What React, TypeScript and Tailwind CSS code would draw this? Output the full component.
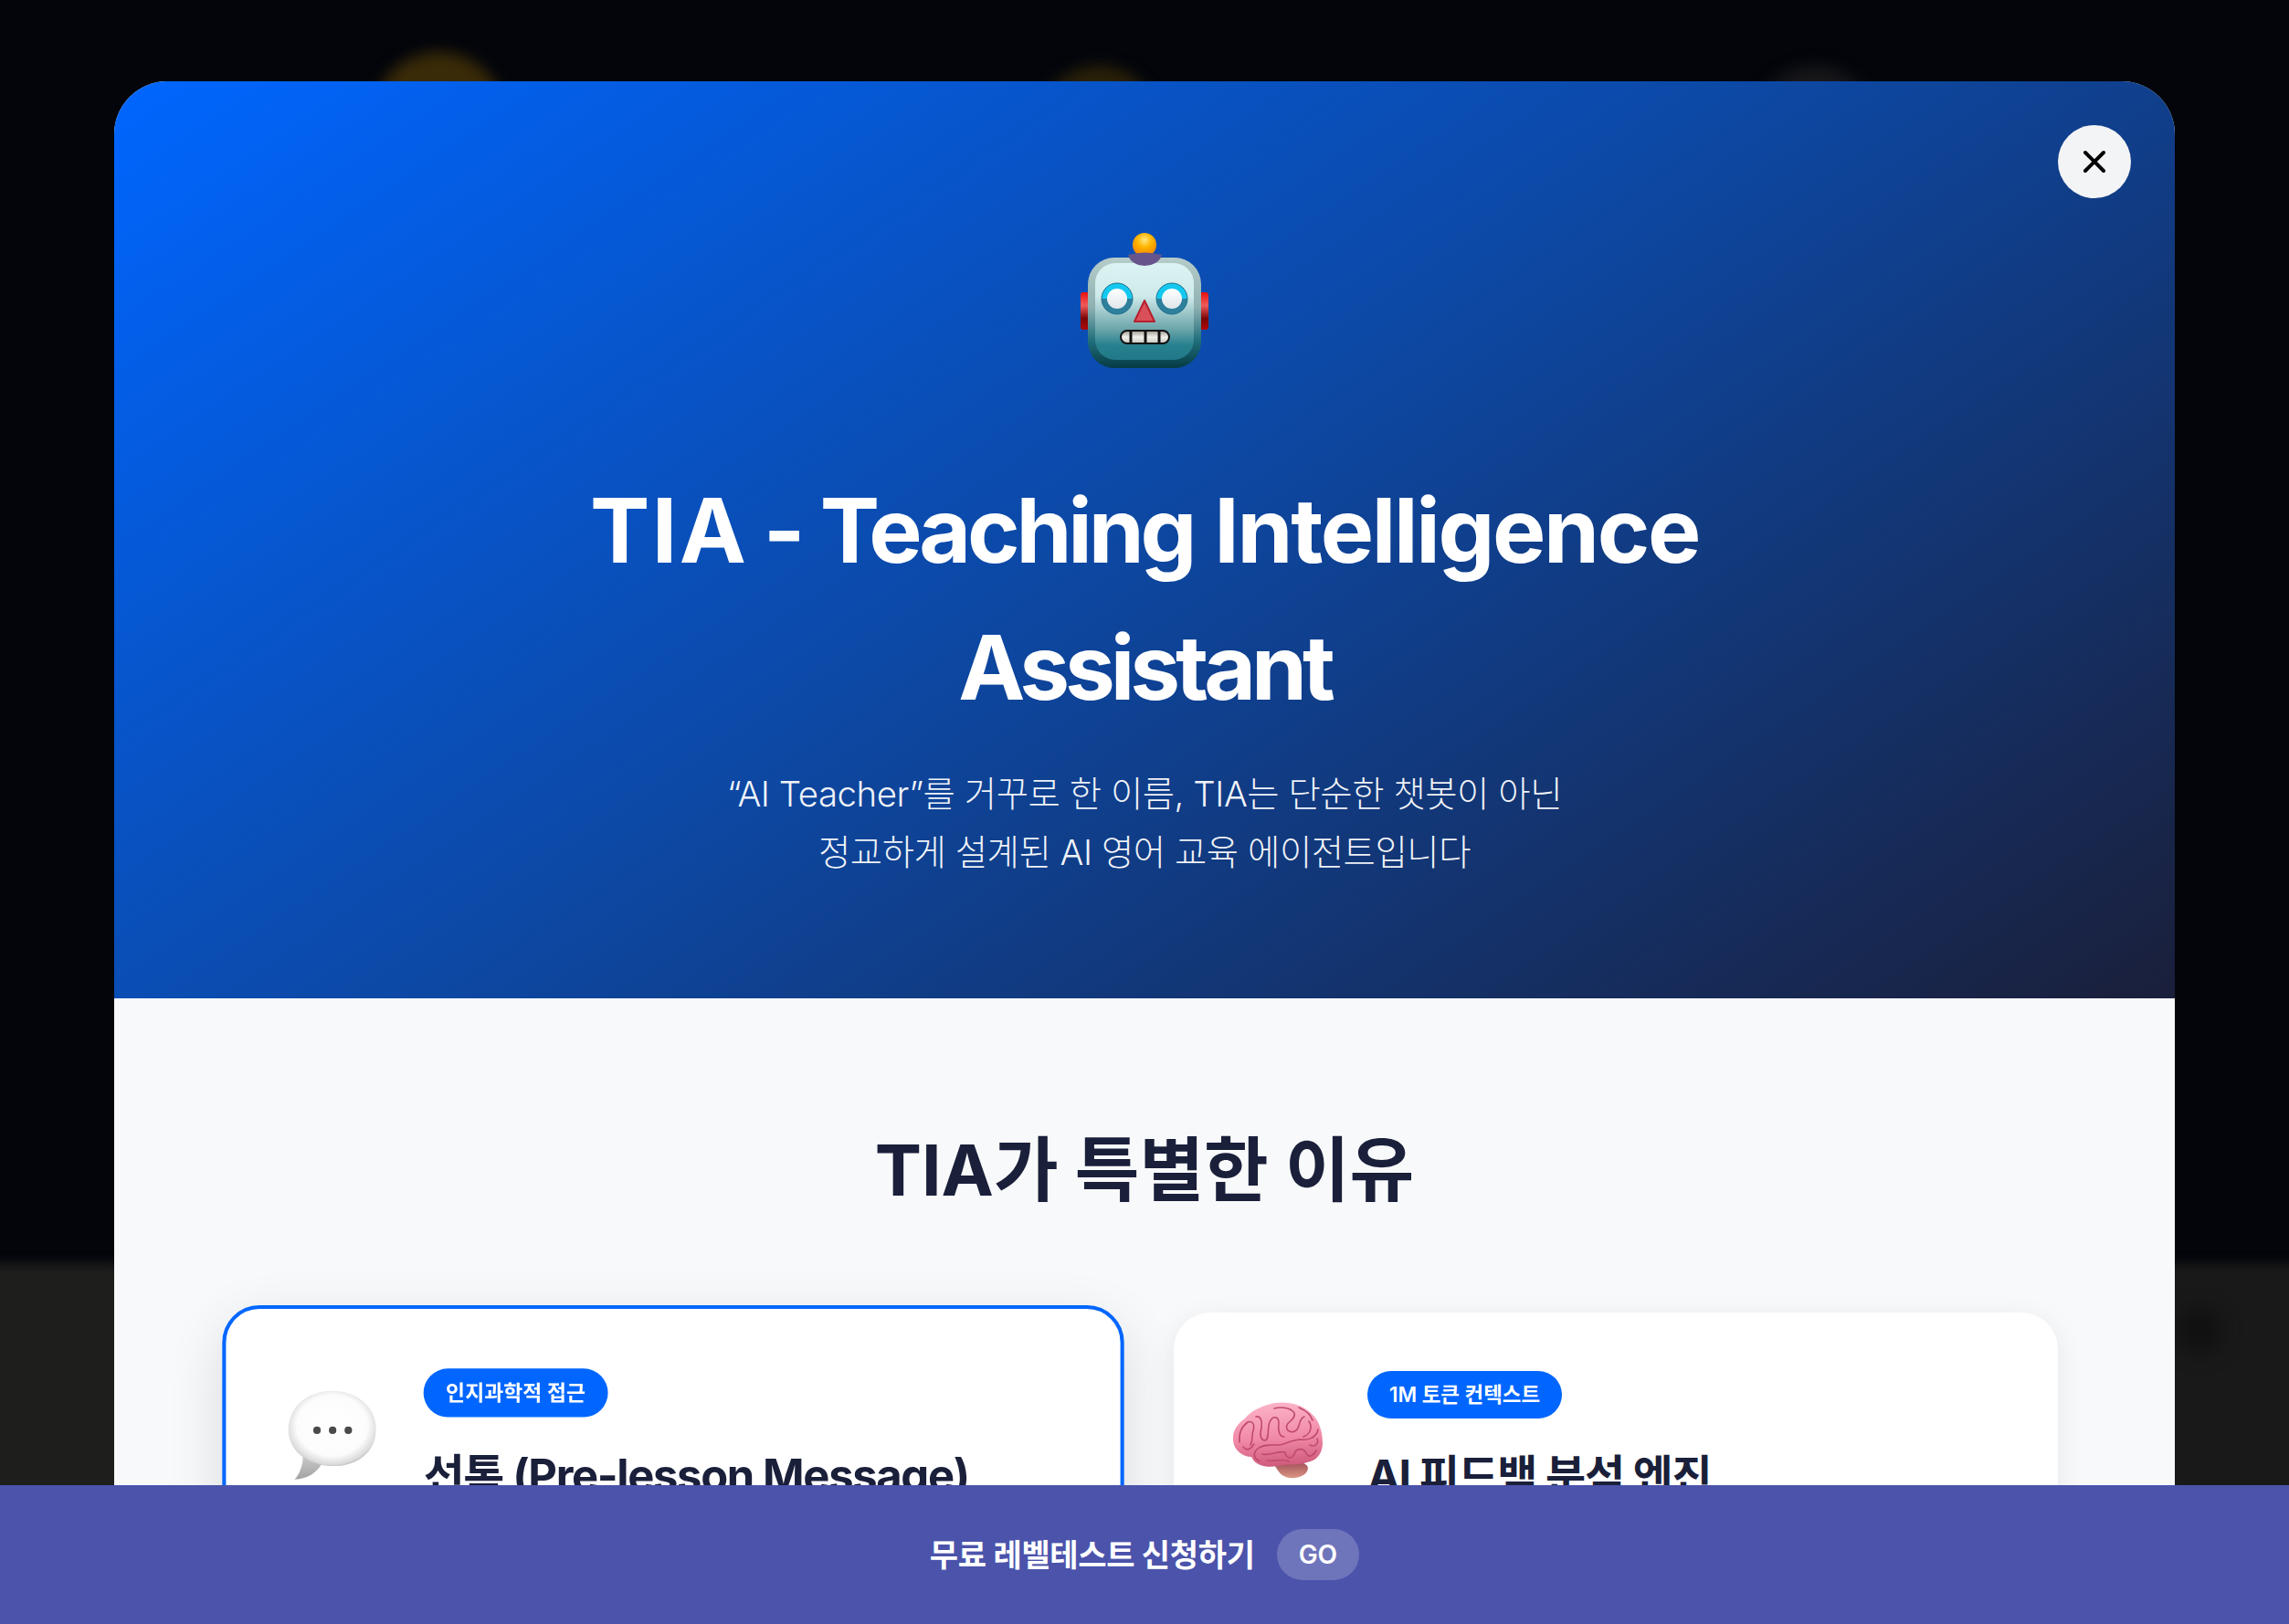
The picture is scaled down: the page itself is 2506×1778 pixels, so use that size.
const kr = "font-['Inter','Noto_Sans_CJK_KR',sans-serif]";

function Robot() {
  return (
    <svg viewBox="0 0 140 148" className="h-[148px] w-[140px]">
      <defs>
        <linearGradient id="rb" x1="0" y1="0" x2="0" y2="1">
          <stop offset="0" stopColor="#b6cdc9" />
          <stop offset="0.45" stopColor="#8fb0b2" />
          <stop offset="0.75" stopColor="#1f6f7c" />
          <stop offset="1" stopColor="#063a44" />
        </linearGradient>
        <linearGradient id="rf" x1="0" y1="0" x2="0" y2="1">
          <stop offset="0" stopColor="#dcf3f3" />
          <stop offset="0.34" stopColor="#cfeaea" />
          <stop offset="0.68" stopColor="#6da6ab" />
          <stop offset="0.85" stopColor="#27808e" />
          <stop offset="1" stopColor="#217988" />
        </linearGradient>
        <linearGradient id="re" x1="0" y1="0" x2="0" y2="1">
          <stop offset="0" stopColor="#e81010" />
          <stop offset="0.35" stopColor="#ef5a5a" />
          <stop offset="0.7" stopColor="#7a0606" />
          <stop offset="1" stopColor="#b00808" />
        </linearGradient>
        <radialGradient id="ro" cx="0.5" cy="0.3" r="0.7">
          <stop offset="0" stopColor="#ffe680" />
          <stop offset="0.45" stopColor="#ffb400" />
          <stop offset="1" stopColor="#f58200" />
        </radialGradient>
        <linearGradient id="rw" x1="0" y1="0" x2="0" y2="1">
          <stop offset="0" stopColor="#ffffff" />
          <stop offset="1" stopColor="#dfe6ea" />
        </linearGradient>
        <linearGradient id="ri" x1="0" y1="0" x2="0" y2="1">
          <stop offset="0" stopColor="#14c8f0" />
          <stop offset="0.5" stopColor="#14c8f0" />
          <stop offset="0.5" stopColor="#2e7f9b" />
          <stop offset="1" stopColor="#2e7f9b" />
        </linearGradient>
        <linearGradient id="rt" x1="0" y1="0" x2="0" y2="1">
          <stop offset="0" stopColor="#9a9a92" />
          <stop offset="0.5" stopColor="#f0f0ea" />
          <stop offset="1" stopColor="#c9c9c1" />
        </linearGradient>
      </defs>
      <rect x="0" y="65" width="10" height="41" rx="3" fill="url(#re)" />
      <rect x="130" y="65" width="10" height="41" rx="3" fill="url(#re)" />
      <rect x="8" y="27" width="124" height="121" rx="29" fill="url(#rb)" />
      <rect x="16" y="33" width="108" height="106" rx="22" fill="url(#rf)" />
      <circle cx="70" cy="13" r="13" fill="url(#ro)" />
      <path d="M52 24 Q70 19 89 24 Q86 35 70 36 Q55 35 52 24Z" fill="#66558c" />
      <circle cx="40" cy="72" r="17" fill="url(#ri)" stroke="#1f6f8a" strokeWidth="1" />
      <circle cx="40" cy="72" r="11" fill="url(#rw)" />
      <circle cx="100" cy="72" r="17" fill="url(#ri)" stroke="#1f6f8a" strokeWidth="1" />
      <circle cx="100" cy="72" r="11" fill="url(#rw)" />
      <path d="M70 74 L81 97 L59 97 Z" fill="#d9505a" stroke="#b5202c" strokeWidth="2" strokeLinejoin="round" />
      <rect x="44" y="107" width="53" height="14" rx="7" fill="url(#rt)" stroke="#111" strokeWidth="2" />
      <path d="M55 107V121M71 107V121M86 107V121" stroke="#111" strokeWidth="3" />
    </svg>
  );
}

function Bubble() {
  return (
    <svg viewBox="0 0 100 100" className="h-24 w-24">
      <defs>
        <radialGradient id="bb" cx="0.5" cy="0.46" r="0.56">
          <stop offset="0" stopColor="#ffffff" />
          <stop offset="0.72" stopColor="#fcfcfc" />
          <stop offset="0.92" stopColor="#dcdcdc" />
          <stop offset="1" stopColor="#b8b8b8" />
        </radialGradient>
        <linearGradient id="bt" x1="0" y1="0" x2="0" y2="1">
          <stop offset="0" stopColor="#cfcfcf" />
          <stop offset="1" stopColor="#a2a2a2" />
        </linearGradient>
      </defs>
      <path d="M17 70 C18 82 14 92 8 99 C22 98 32 92 38 82Z" fill="url(#bt)" />
      <path d="M50 0 C78 0 99 18 99 43 C99 68 78 84 52 84 C24 84 1 68 1 43 C1 18 22 0 50 0Z" fill="url(#bb)" />
      <circle cx="33" cy="44" r="4.2" fill="#4a4a4a" />
      <circle cx="50.5" cy="44" r="4.2" fill="#4a4a4a" />
      <circle cx="68" cy="44" r="4.2" fill="#4a4a4a" />
    </svg>
  );
}

function Brain() {
  return (
    <svg viewBox="0 0 100 84" className="h-[84px] w-[100px]">
      <defs>
        <linearGradient id="br" x1="0.4" y1="0" x2="0.5" y2="1">
          <stop offset="0" stopColor="#fcb4c8" />
          <stop offset="0.55" stopColor="#f18aa8" />
          <stop offset="1" stopColor="#cf5a7a" />
        </linearGradient>
        <linearGradient id="bs" x1="0" y1="0" x2="0" y2="1">
          <stop offset="0" stopColor="#9c4a56" />
          <stop offset="1" stopColor="#dc9684" />
        </linearGradient>
      </defs>
      <path d="M46 68 C58 62 82 64 83 72 C83 80 72 84 63 83 C54 82 50 76 46 68Z" fill="url(#bs)" />
      <path d="M1 42 C0 30 7 23 14 18 C22 8 34 4 46 1 C60 -1 76 2 86 12 C96 20 99 34 99 46 C98 58 92 64 82 66 C70 70 60 67 50 70 C40 72 26 71 21 60 C13 60 2 54 1 42Z" fill="url(#br)" />
      <g fill="none" stroke="#bf4a6e" strokeWidth="1.6" strokeLinecap="round" strokeLinejoin="round">
        <path d="M8 44 C7 34 10 27 17 22 C22 20 25 24 23 31 C21 37 23 42 20 47" />
        <path d="M26 16 C31 15 33 20 32 28 C30 36 31 42 36 42 C41 41 38 30 41 22 C44 15 50 15 51 22 C50 30 51 38 57 38" />
        <path d="M46 7 C54 5 64 6 68 12 C70 18 62 21 60 25 C58 31 64 35 70 31 C75 27 72 19 79 16" />
        <path d="M73 6 C80 9 86 13 88 20 M84 21 C88 27 86 35 78 38" />
        <path d="M94 30 C92 40 82 42 74 41 C64 42 58 46 52 47 C44 47 34 46 28 51 C22 56 24 62 30 65" />
        <path d="M33 57 C42 59 50 53 58 55 C59 62 65 63 68 57 C70 50 78 50 81 56 C83 61 88 60 92 53" />
        <path d="M93 40 C95 45 91 50 85 47 M12 49 C16 54 20 52 24 46 M38 64 C46 66 54 61 62 65" />
      </g>
    </svg>
  );
}

function Card({ active, emoji, badge, title }: { active?: boolean; emoji: React.ReactNode; badge: string; title: string }) {
  return (
    <div
      className={
        "flex h-[800px] items-start gap-12 rounded-[40px] bg-white p-16 " +
        (active
          ? "scale-[1.02] border-4 border-[#0066ff] shadow-[0_20px_60px_rgba(0,0,0,0.12)]"
          : "shadow-[0_8px_32px_rgba(0,0,0,0.08)]")
      }
    >
      <div className="w-[100px] shrink-0">{emoji}</div>
      <div className="flex flex-col items-start">
        <span className={`rounded-full bg-[#0066ff] px-6 py-[10px] text-[22.4px] leading-8 font-semibold text-white ${kr}`}>{badge}</span>
        <h3 className={`mt-6 text-[48px] leading-[77px] font-bold tracking-[-0.028em] text-[#1a1f3a] ${kr}`}>{title}</h3>
      </div>
    </div>
  );
}

export default function App() {
  return (
    <div className="relative h-[1778px] w-[2506px] overflow-hidden bg-[#03050b]">
      {/* dimmed page behind the modal */}
      <div className="absolute top-[57px] left-[408px] h-[145px] w-[145px] rounded-full bg-[#3a2b08] blur-[8px]" />
      <div className="absolute top-[72px] left-[1138px] h-[130px] w-[130px] rounded-full bg-[#2a2108] blur-[8px]" />
      <div className="absolute top-[72px] left-[1922px] h-[130px] w-[130px] rounded-full bg-[#17171a] blur-[8px]" />
      <div className="absolute top-[1383px] -right-4 -left-4 h-[400px] bg-gradient-to-r from-[#1e1e1d] to-[#191919] blur-[6px]" />
      <div className="absolute top-[1432px] left-[2383px] h-[50px] w-[50px] rounded-full bg-[#101110] blur-[10px]" />

      {/* modal */}
      <div className="absolute top-[89px] left-[125px] h-[1800px] w-[2256px] overflow-hidden rounded-[58px] bg-[#f8f9fa]">
        <div className="relative flex h-[1004px] flex-col items-center bg-[linear-gradient(146deg,#0066ff_0%,#0d47a1_50%,#1a1f3a_100%)] pt-[166px] text-center text-white">
          <button className="absolute top-[48px] right-[48px] flex h-20 w-20 items-center justify-center rounded-full bg-[#f3f4f6] text-black">
            <svg viewBox="0 0 24 24" className="h-10 w-10" fill="none" stroke="currentColor" strokeWidth="2.4" strokeLinecap="round">
              <path d="M6 6l12 12M18 6L6 18" />
            </svg>
          </button>
          <Robot />
          <h1 className={`mt-[103px] w-[1400px] text-[98px] leading-[150px] font-bold ${kr}`}>
            <span className="tracking-[0.025em]">TIA</span>
            <span className="[word-spacing:-7px]"> - </span>
            <span className="tracking-[-0.043em]">Teaching</span>{" "}
            <span className="tracking-[-0.024em]">Intelligence</span> <span className="tracking-[-0.052em]">Assistant</span>
          </h1>
          <p className={`mt-[31px] text-[38.4px] leading-[64px] font-light tracking-[-0.012em] text-white/95 ${kr}`}>
            “AI Teacher”를 거꾸로 한 이름, TIA는 단순한 챗봇이 아닌
            <br />
            정교하게 설계된 AI 영어 교육 에이전트입니다
          </p>
        </div>
        <div className="px-32 pt-[125px]">
          <h2 className={`text-center text-[76.8px] leading-[128px] font-bold text-[#1a1f3a] ${kr}`}>TIA가 특별한 이유</h2>
          <div className="mt-[91px] grid grid-cols-2 gap-16">
            <Card active emoji={<div className="mt-6 ml-0.5"><Bubble /></div>} badge="인지과학적 접근" title="선톡 (Pre-lesson Message)" />
            <Card emoji={<div className="mt-[34px]"><Brain /></div>} badge="1M 토큰 컨텍스트" title="AI 피드백 분석 엔진" />
          </div>
        </div>
      </div>

      {/* sticky CTA */}
      <div className="absolute right-0 bottom-0 left-0 flex h-[152px] items-center justify-center gap-6 bg-[#4b53ab] text-white">
        <span className={`text-[34px] font-bold tracking-[-0.01em] ${kr}`}>무료 레벨테스트 신청하기</span>
        <span className={`flex h-14 items-center rounded-full bg-white/20 px-6 text-[28px] font-semibold ${kr}`}>GO</span>
      </div>
    </div>
  );
}
